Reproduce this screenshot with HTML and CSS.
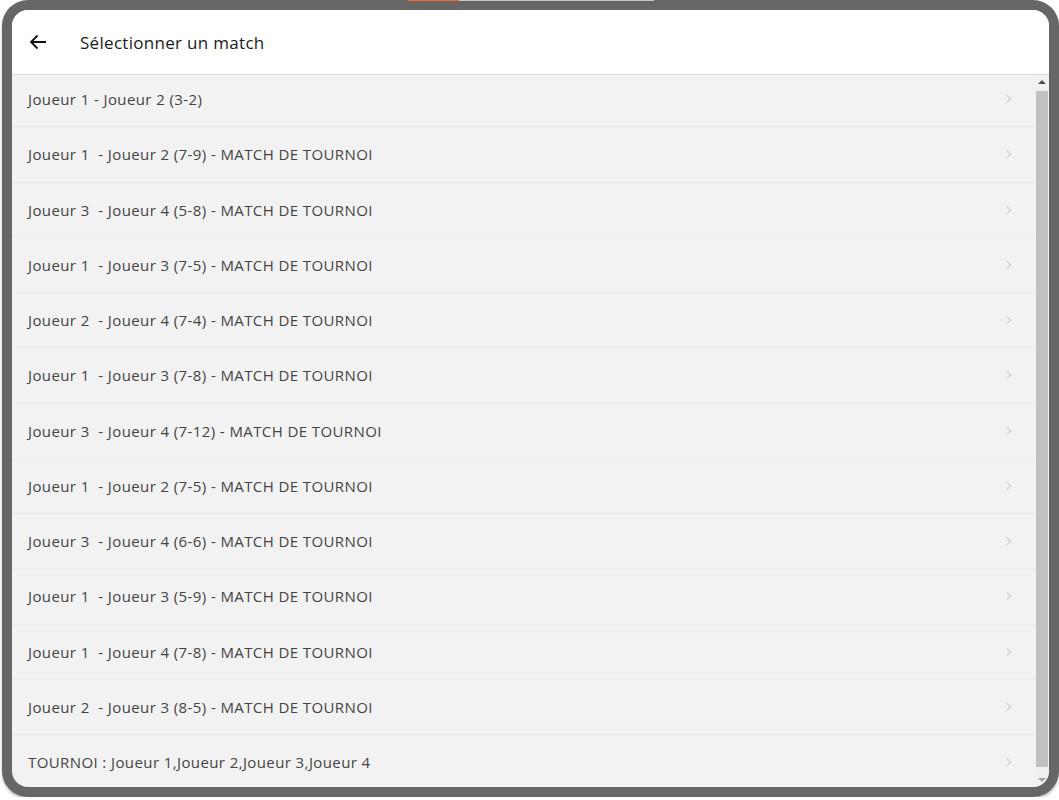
FILE: index.html
```html
<!DOCTYPE html>
<html lang="fr">

<head>
    <meta charset="UTF-8">
    <meta name="viewport" content="width=device-width, initial-scale=1.0">
    <title>Sélectionner un match</title>
    <link rel="stylesheet" href="styles.css">
</head>

<body>
    <div class="device">
        <!-- barre de progression en haut -->
        <div class="top-strip">
            <span class="strip-orange"></span>
            <span class="strip-grey"></span>
        </div>

        <div class="screen">
            <div class="header">
                <button class="btn-back" aria-label="Retour">
                    <svg width="18" height="16" viewBox="0 0 18 16">
                        <path d="M17 8H2M8.5 1.5L2 8l6.5 6.5" fill="none" stroke="#111" stroke-width="1.8" />
                    </svg>
                </button>
                <h1>Sélectionner un match</h1>
            </div>

            <div class="content">
                <ul class="match-list">
                    <li><span>Joueur 1 - Joueur 2 (3-2)</span><i class="chevron"></i></li>
                    <li><span>Joueur 1  - Joueur 2 (7-9) - MATCH DE TOURNOI</span><i class="chevron"></i></li>
                    <li><span>Joueur 3  - Joueur 4 (5-8) - MATCH DE TOURNOI</span><i class="chevron"></i></li>
                    <li><span>Joueur 1  - Joueur 3 (7-5) - MATCH DE TOURNOI</span><i class="chevron"></i></li>
                    <li><span>Joueur 2  - Joueur 4 (7-4) - MATCH DE TOURNOI</span><i class="chevron"></i></li>
                    <li><span>Joueur 1  - Joueur 3 (7-8) - MATCH DE TOURNOI</span><i class="chevron"></i></li>
                    <li><span>Joueur 3  - Joueur 4 (7-12) - MATCH DE TOURNOI</span><i class="chevron"></i></li>
                    <li><span>Joueur 1  - Joueur 2 (7-5) - MATCH DE TOURNOI</span><i class="chevron"></i></li>
                    <li><span>Joueur 3  - Joueur 4 (6-6) - MATCH DE TOURNOI</span><i class="chevron"></i></li>
                    <li><span>Joueur 1  - Joueur 3 (5-9) - MATCH DE TOURNOI</span><i class="chevron"></i></li>
                    <li><span>Joueur 1  - Joueur 4 (7-8) - MATCH DE TOURNOI</span><i class="chevron"></i></li>
                    <li><span>Joueur 2  - Joueur 3 (8-5) - MATCH DE TOURNOI</span><i class="chevron"></i></li>
                    <li><span>TOURNOI : Joueur 1,Joueur 2,Joueur 3,Joueur 4</span><i class="chevron"></i></li>
                </ul>

                <!-- scrollbar -->
                <div class="scrollbar">
                    <span class="arrow-up"></span>
                    <div class="track">
                        <div class="thumb"></div>
                    </div>
                    <span class="arrow-down"></span>
                </div>
            </div>
        </div>
    </div>
</body>

</html>
```

FILE: styles.css
```css
body {
    font-family: "Open Sans", sans-serif;
    margin: 0;
    padding: 0;
    background-color: #fff;
    overflow: hidden;
}

.device {
    position: relative;
    width: 1057px;
    height: 797px;
    margin-left: 2px;
    padding: 10px;
    box-sizing: border-box;
    background: #666;
    border-radius: 26px;
    box-shadow: 0 2px 3px rgba(0, 0, 0, 0.25);
    display: flex;
}

.top-strip {
    position: absolute;
    top: 0;
    left: 406px;
    height: 1px;
    display: flex;
}

.strip-orange {
    width: 51px;
    background: #f06a2a;
}

.strip-grey {
    width: 195px;
    background: #c8c8c8;
}

.screen {
    flex: 1;
    display: flex;
    flex-direction: column;
    background: #f2f2f2;
    border-radius: 16px;
    overflow: hidden;
}

.header {
    height: 64px;
    flex-shrink: 0;
    display: flex;
    align-items: center;
    background: #fff;
    border-bottom: 1px solid #dcdcdc;
}

.btn-back {
    margin-left: 17px;
    padding: 0;
    background: none;
    border: none;
    display: flex;
    align-items: center;
    cursor: pointer;
}

h1 {
    margin: 0 0 0 33px;
    font-size: 17px;
    letter-spacing: 0.3px;
    font-weight: 400;
    color: #1a1a1a;
}

.content {
    flex: 1;
    display: flex;
    min-height: 0;
}

.match-list {
    flex: 1;
    list-style: none;
    margin: 0;
    padding: 0;
    overflow: hidden;
}

.match-list li {
    height: 55.25px;
    display: flex;
    align-items: center;
    justify-content: space-between;
    padding: 0 25px 0 16px;
    border-bottom: 1px solid #ececec;
    box-sizing: border-box;
    font-size: 15px;
    letter-spacing: 0.4px;
    color: #444;
    white-space: pre;
    cursor: pointer;
}

/* la liste est légèrement défilée */
.match-list li:first-child {
    margin-top: -3px;
}

.chevron {
    width: 5px;
    height: 5px;
    border-top: 1.5px solid #cbcbcb;
    border-right: 1.5px solid #cbcbcb;
    transform: rotate(45deg);
}

.scrollbar {
    width: 14px;
    flex-shrink: 0;
    display: flex;
    flex-direction: column;
    align-items: center;
    background: #f1f1f1;
}

.arrow-up,
.arrow-down {
    width: 0;
    height: 0;
    margin: 5px 0;
    border-left: 4px solid transparent;
    border-right: 4px solid transparent;
}

.arrow-up {
    border-bottom: 4px solid #505050;
}

.arrow-down {
    border-top: 4px solid #a3a3a3;
}

.track {
    flex: 1;
    width: 100%;
    padding: 2px 1px 6px 1px;
    box-sizing: border-box;
    display: flex;
}

.thumb {
    flex: 1;
    background: #c1c1c1;
}
```
